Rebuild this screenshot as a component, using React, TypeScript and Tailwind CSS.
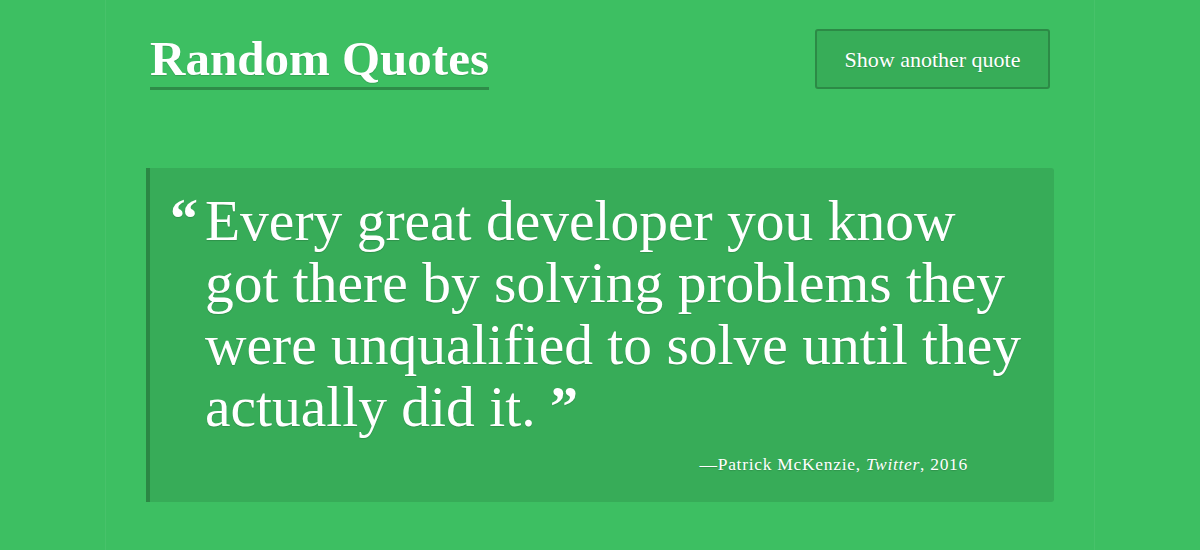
import React from "react";

export default function App() {
  const serif = { fontFamily: '"Liberation Serif", "DejaVu Serif", serif' };
  return (
    <div className="min-h-[550px] w-full bg-[#3dbf62] text-white" style={serif}>
      <div className="mx-auto w-[990px] min-h-[550px] border-x border-white/5 px-[40px]">
        <header className="flex items-start justify-between px-[4px] pt-[29px]">
          <h1 className="mt-[3px] border-b-[3px] border-[#2e8c48] pb-[2px] text-[49px] font-bold leading-[53px] [text-shadow:0_1px_1px_rgba(0,0,0,0.15)]">
            Random Quotes
          </h1>
          <button className="h-[60px] w-[235px] rounded-[3px] border-2 border-[#2c8a46] bg-[#37ad58] text-[22px] text-white [text-shadow:0_1px_1px_rgba(0,0,0,0.15)]">
            Show another quote
          </button>
        </header>

        <section className="mt-[78px] rounded-r-[3px] border-l-[4px] border-[#2b8744] bg-[#37ac58] pb-[26px] pl-[20px] pr-[20px] pt-[22px] [text-shadow:0_1px_1px_rgba(0,0,0,0.15)]">
          <div className="flex">
            <span className="w-[35px] shrink-0 pt-[1px] text-[56px] font-bold leading-[56px] tracking-[-2px]">
              &ldquo;
            </span>
            <p className="text-[57.5px] leading-[62px]">
              Every great developer you know
              <br />
              got there by solving problems they
              <br />
              were unqualified to solve until they
              <br />
              actually did it.{" "}
              <span className="text-[56px] font-bold leading-[0] tracking-[-2px]">&rdquo;</span>
            </p>
          </div>
          <p className="mr-[66px] mt-[14px] text-right text-[17.5px] leading-[24px] tracking-[0.7px]">
            &mdash;Patrick McKenzie, <em>Twitter</em>, 2016
          </p>
        </section>
      </div>
    </div>
  );
}
